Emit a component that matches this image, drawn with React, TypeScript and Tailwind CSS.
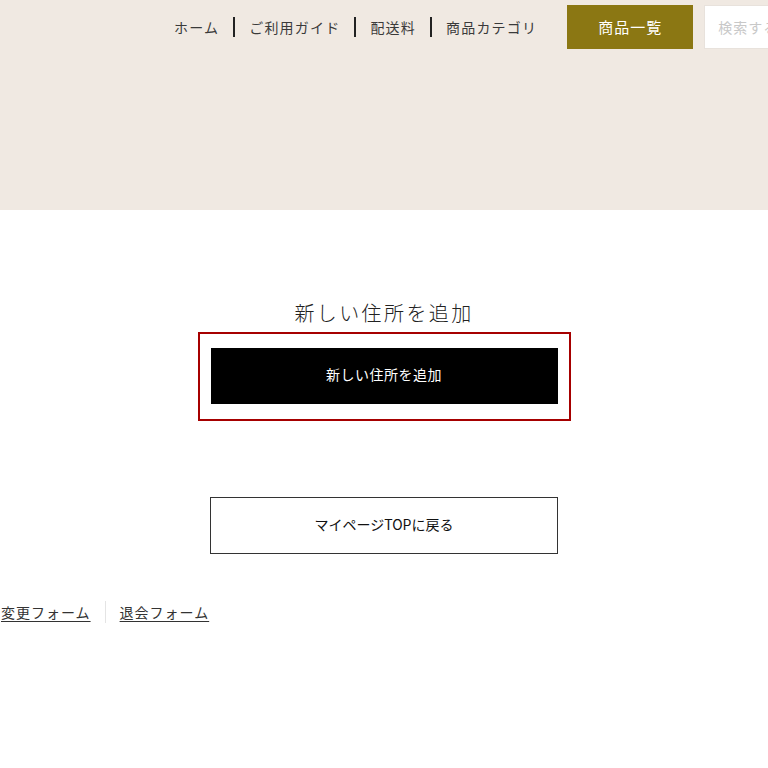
const navItems = ["ホーム", "ご利用ガイド", "配送料", "商品カテゴリ"];

export default function App() {
  return (
    <div
      className="min-h-[768px] w-[768px] overflow-hidden bg-white text-[#333]"
      style={{ fontFamily: '"Noto Sans CJK JP", "Noto Sans", sans-serif' }}
    >
      {/* Header */}
      <header className="h-[210px] bg-[#f0e9e2]">
        <div className="flex items-center whitespace-nowrap pl-[174px] pt-[5px]">
          <nav className="flex items-center text-[14px] tracking-[1.2px] text-[#3a3a3a]">
            {navItems.map((item, i) => (
              <div key={item} className="flex items-center">
                {i > 0 && <span className="mx-[14px] h-[20px] w-[2px] bg-[#222]" />}
                <span>{item}</span>
              </div>
            ))}
          </nav>
          <button
            type="button"
            className="ml-[30px] flex h-[44px] w-[126px] shrink-0 items-center justify-center bg-[#8b7713] text-[15px] tracking-[1px] text-white"
          >
            商品一覧
          </button>
          <div className="ml-[11px] flex h-[44px] w-[200px] shrink-0 items-center border border-[#e8e2dc] bg-white pl-[13px] text-[14px] tracking-[1px] text-[#c8c8c8]">
            検索する
          </div>
        </div>
      </header>

      {/* Main */}
      <main className="flex flex-col items-center pt-[88px]">
        <h2 className="text-[20px] font-light leading-[30px] tracking-[2.4px] text-[#222]">
          新しい住所を追加
        </h2>
        <div className="mt-[4px] border-2 border-[#a60000] px-[11px] pb-[15px] pt-[14px]">
          <button
            type="button"
            className="flex h-[56px] w-[347px] items-center justify-center bg-black pb-[4px] text-[14px] tracking-[0.5px] text-white"
          >
            新しい住所を追加
          </button>
        </div>
        <button
          type="button"
          className="mt-[76px] flex h-[57px] w-[348px] items-center justify-center border border-[#333] bg-white pb-[2px] text-[14px] text-[#111]"
        >
          マイページTOPに戻る
        </button>
      </main>

      {/* Footer links */}
      <div className="mt-[47px] flex items-center whitespace-nowrap text-[14px] tracking-[1px] text-[#333]">
        <a className="pl-px underline underline-offset-[3px]">変更フォーム</a>
        <span className="mx-[14px] h-[22px] w-px bg-[#e4e4e4]" />
        <a className="underline underline-offset-[3px]">退会フォーム</a>
      </div>
    </div>
  );
}
